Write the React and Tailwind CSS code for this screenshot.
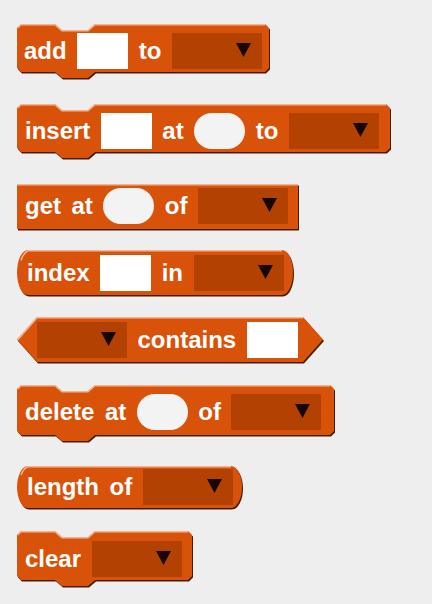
import React from 'react';

const FILL = '#d95209';
const LIGHT = '#f4b493';
const DARK = '#4a1b02';

// outline of a block, by its shape
const outline = (shape, W, H) => {
  const c = 4, d = 6;
  if (shape === 'command')
    return `M0,${c} L${c},0 L38,0 L45,${d} L71,${d} L78,0 L${W - c},0 L${W},${c} L${W},${H - c} L${W - c},${H} L78,${H} L71,${H + d} L45,${H + d} L38,${H} L${c},${H} L0,${H - c} Z`;
  if (shape === 'reporter')
    return `M11,0 L${W - 11},0 A11 ${H / 2} 0 0 1 ${W - 11},${H} L11,${H} A11 ${H / 2} 0 0 1 11,0 Z`;
  if (shape === 'predicate')
    return `M0,${H / 2} L20,0 L${W - 20},0 L${W},${H / 2} L${W - 20},${H} L20,${H} Z`;
  return `M0,0 L${W},0 L${W},${H} L0,${H} Z`;
};

const topEdge = (shape, W, H) => {
  const c = 4, d = 6;
  if (shape === 'command')
    return `M0.7,${c} L${c},0.75 L38,0.75 L45,${d + 0.75} L71,${d + 0.75} L78,0.75 L${W - c},0.75`;
  if (shape === 'reporter') return `M4,${H / 2 - 12} A11 ${H / 2} 0 0 1 11,0.75 L${W - 11},0.75`;
  if (shape === 'predicate') return `M1,${H / 2} L20,0.75 L${W - 20},0.75`;
  return `M0,0.75 L${W},0.75`;
};

const Block = ({ shape, W, H, mt, pl, pt, children }) => {
  const boxH = shape === 'command' ? H + 8 : H + 2;
  return (
    <div className="relative shrink-0" style={{ width: W + 2, height: boxH, marginTop: mt }}>
      <svg className="absolute left-0 top-0" width={W + 2} height={boxH}>
        <path d={outline(shape, W, H)} fill={DARK} transform="translate(1,1.5)" />
        <path d={outline(shape, W, H)} fill={FILL} />
        <path d={topEdge(shape, W, H)} fill="none" stroke={LIGHT} strokeWidth="1.5" />
      </svg>
      <div className="relative flex items-start gap-[10.5px]" style={{ paddingLeft: pl, paddingTop: pt }}>
        {children}
      </div>
    </div>
  );
};

const Word = ({ children }) => (
  <span className="h-9 leading-[36px] text-[24px] font-bold text-white font-['Liberation_Sans',Arial,sans-serif] whitespace-nowrap">
    {children}
  </span>
);

const Box = () => <div className="w-[51px] h-9 bg-white shrink-0" />;
const Oval = () => <div className="w-[51px] h-9 bg-[#f3f3f3] rounded-full shrink-0" />;
const Drop = () => (
  <div className="w-[90px] h-9 bg-[#b34202] flex items-start justify-end pr-[11px] pt-[10px] shrink-0">
    <svg width="15" height="14" viewBox="0 0 15 14">
      <polygon points="0,0 15,0 7.5,14" fill="#160700" />
    </svg>
  </div>
);

export default function App() {
  return (
    <div className="w-[432px] h-[604px] bg-[#eeeeee] flex flex-col items-start pl-[17px] pt-[24px] overflow-hidden">
      <Block shape="command" W={252} H={48} mt={0} pl={7} pt={9}>
        <Word>add</Word><Box /><Word>to</Word><Drop />
      </Block>
      <Block shape="command" W={373} H={48} mt={24} pl={8} pt={9}>
        <Word>insert</Word><Box /><Word>at</Word><Oval /><Word>to</Word><Drop />
      </Block>
      <Block shape="rect" W={281} H={45} mt={24} pl={8} pt={4}>
        <Word>get</Word><Word>at</Word><Oval /><Word>of</Word><Drop />
      </Block>
      <Block shape="reporter" W={276} H={45} mt={19} pl={10} pt={5}>
        <Word>index</Word><Box /><Word>in</Word><Drop />
      </Block>
      <Block shape="predicate" W={306} H={45} mt={20} pl={20} pt={5}>
        <Drop /><Word>contains</Word><Box />
      </Block>
      <Block shape="command" W={317} H={50} mt={21} pl={8} pt={9}>
        <Word>delete</Word><Word>at</Word><Oval /><Word>of</Word><Drop />
      </Block>
      <Block shape="reporter" W={225} H={42} mt={23} pl={10} pt={3}>
        <Word>length</Word><Word>of</Word><Drop />
      </Block>
      <Block shape="command" W={175} H={49} mt={21} pl={8} pt={10}>
        <Word>clear</Word><Drop />
      </Block>
    </div>
  );
}
